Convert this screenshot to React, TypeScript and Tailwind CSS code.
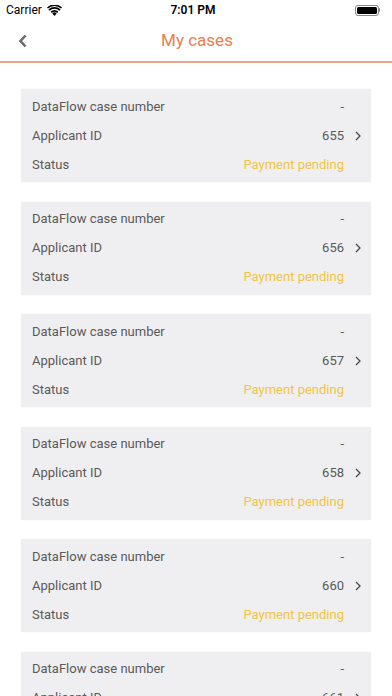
import React from "react";

const cases = ["655", "656", "657", "658", "660", "661"];

const Row = ({ label, value, tone, chevron }: { label: string; value: string; tone?: string; chevron?: boolean }) => (
  <div className="flex items-center h-[29px] pl-[11px] pr-[10px]">
    <span className="flex-1 text-[#5a5a5a]">{label}</span>
    <span className={tone ?? "text-[#5a5a5a]"}>{value}</span>
    <span className="w-[17px] flex justify-end">
      {chevron && (
        <svg width="6" height="10" viewBox="0 0 6 10" fill="none">
          <path d="M1 1l4 4-4 4" stroke="#4a4a4a" strokeWidth="1.3" />
        </svg>
      )}
    </span>
  </div>
);

const CaseCard = ({ id }: { id: string }) => (
  <div className="bg-[#efeff1] rounded-[2px] py-[3px] shadow-[0_0_1px_rgba(0,0,0,0.12)]">
    <Row label="DataFlow case number" value="-" />
    <Row label="Applicant ID" value={id} chevron />
    <Row label="Status" value="Payment pending" tone="text-[#f2c443]" />
  </div>
);

export default function App() {
  return (
    <div className="w-[392px] h-[696px] overflow-hidden bg-white font-['Roboto','Noto_Sans',sans-serif]">
      <div className="h-[20px] flex items-center px-[6px] text-[12px] text-black">
        <div className="flex-1 flex items-center gap-[5px]">
          <span>Carrier</span>
          <svg width="15" height="11" viewBox="0 0 15 11">
            <path d="M7.5 11L5.3 8.4a3.2 3.2 0 014.4 0z" fill="#000" />
            <path d="M3.6 6.6a5.6 5.6 0 017.8 0L10.2 8a4 4 0 00-5.4 0z" fill="#000" />
            <path d="M1.4 4.4a8.8 8.8 0 0112.2 0l-1.2 1.3a7 7 0 00-9.8 0z" fill="#000" />
            <path d="M0 2.4a11 11 0 0115 0L14 3.5a9.6 9.6 0 00-13 0z" fill="#000" />
          </svg>
        </div>
        <span className="font-semibold">7:01 PM</span>
        <div className="flex-1 flex justify-end pr-[6px]">
          <div className="flex items-center">
            <div className="w-[24px] h-[11px] border border-[#888] rounded-[3px] p-[1px]">
              <div className="w-full h-full bg-black rounded-[1.5px]" />
            </div>
            <div className="w-[1.5px] h-[4px] bg-[#888] rounded-r-sm" />
          </div>
        </div>
      </div>
      <div className="h-[41px] flex items-center relative">
        <svg className="absolute left-[18px] top-[14px]" width="10" height="14" viewBox="0 0 10 14" fill="none">
          <path d="M7.5 1.5L2.5 7l5 5.5" stroke="#6b6b6b" strokeWidth="2.6" />
        </svg>
        <div className="flex-1 text-center text-[17px] text-[#e5804f] pl-[2px]">My cases</div>
      </div>
      <div className="h-[2px] bg-[#eda58a]" />
      <div className="px-[21px] pt-[26px] flex flex-col gap-[19.5px] text-[13px]">
        {cases.map((c) => (
          <CaseCard key={c} id={c} />
        ))}
      </div>
    </div>
  );
}
